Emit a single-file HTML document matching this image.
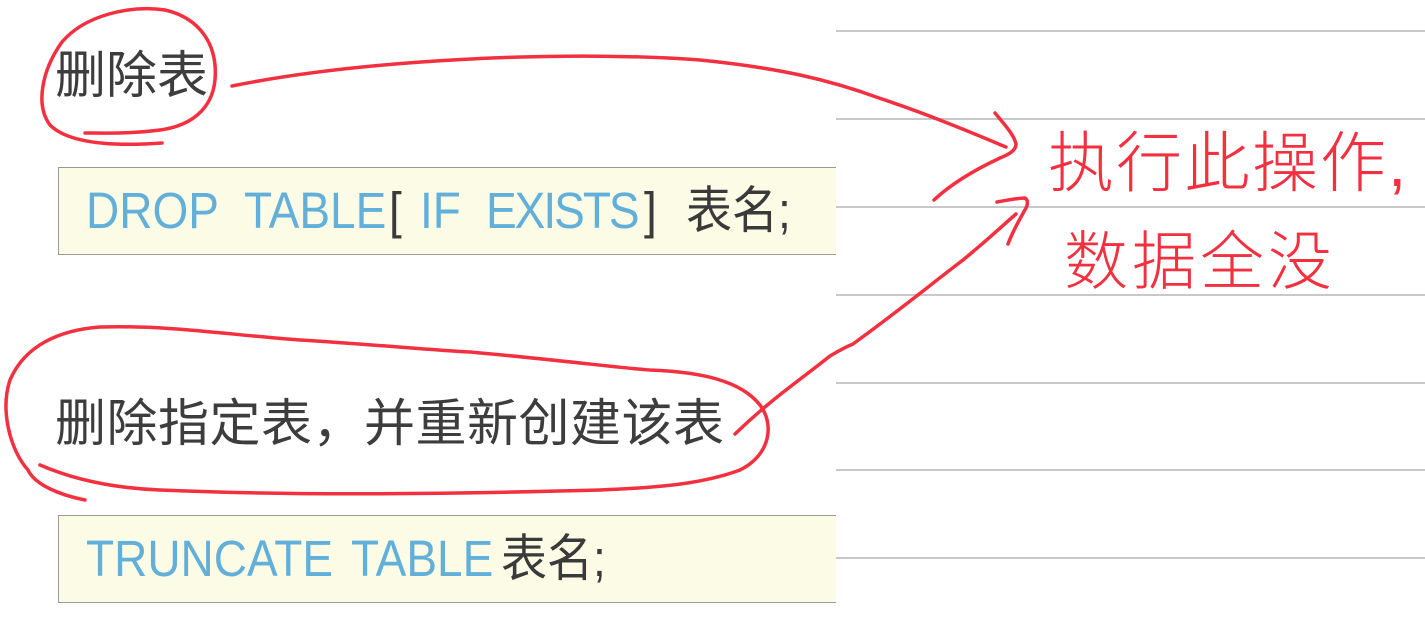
<!DOCTYPE html>
<html><head><meta charset="utf-8"><style>
html,body{margin:0;padding:0;background:#fff;width:1425px;height:626px;overflow:hidden;position:relative}
.h{position:absolute;left:55px;font-family:"Liberation Sans","Noto Sans CJK SC",sans-serif;font-size:51px;color:#3d3d3d;line-height:1;white-space:nowrap}
.box{position:absolute;left:58px;width:778px;height:88px;background:#fcfce6;border:1px solid #9a9a9a;border-right:none;box-sizing:border-box}
.code{position:absolute;left:27px;font-family:"Liberation Sans","Noto Sans CJK SC",sans-serif;font-size:46px;color:#62afd9;white-space:nowrap;line-height:1;transform:scaleY(1.1);transform-origin:left top}
.code span{position:absolute;top:0}
.k{color:#3a3a3a}
.ln{position:absolute;left:836px;width:589px;height:2px;background:#c8c8c8}
.rt{position:absolute;font-family:"Liberation Sans","Noto Sans CJK SC",sans-serif;color:#f2303f;font-weight:300;white-space:nowrap;line-height:1}
</style></head><body>
<div class="ln" style="top:30px"></div>
<div class="ln" style="top:118px"></div>
<div class="ln" style="top:206px"></div>
<div class="ln" style="top:294px"></div>
<div class="ln" style="top:382px"></div>
<div class="ln" style="top:469px"></div>
<div class="ln" style="top:557px"></div>

<div class="h" style="top:50px">删除表</div>
<div class="box" style="top:167px"><div class="code" style="top:17px">
<span style="left:0">DROP</span><span style="left:158px">TABLE</span><span class="k" style="left:303px">[</span><span style="left:334px">IF</span><span style="left:400px;letter-spacing:-2px">EXISTS</span><span class="k" style="left:558px">]</span><span class="k" style="left:600px">表名;</span>
</div></div>
<div class="h" style="top:398px;letter-spacing:0.5px">删除指定表，并重新创建该表</div>
<div class="box" style="top:515px"><div class="code" style="top:17px">
<span style="left:0">TRUNCATE</span><span style="left:265px">TABLE</span><span class="k" style="left:415px">表名;</span>
</div></div>

<div class="rt" style="left:1048px;top:130px;font-size:66px;letter-spacing:2px">执行此操作,</div>
<div class="rt" style="left:1064px;top:230px;font-size:64px;letter-spacing:4px">数据全没</div>

<svg width="1425" height="626" style="position:absolute;left:0;top:0" fill="none" stroke="#f2303f" stroke-width="3.5" stroke-linecap="round" stroke-linejoin="round">
<path d="M162 143 C120 146 70 145 50 125 C35 105 42 70 62 42 C85 15 130 5 165 10 C200 18 218 45 215 80 C212 110 190 126 160 130 C130 134 100 133 85 133"/>
<path d="M232 86 C360 60 560 50 700 60 C780 68 830 80 879 98 C930 115 970 132 1006 147"/>
<path d="M995 113 C1005 125 1014 135 1016 144 C1016 150 1010 154 1000 158 C970 172 950 185 934 200"/>
<path d="M85 500 C60 495 35 485 28 470 M28 470 C10 450 0 410 10 380 C25 345 60 330 100 327 C170 325 230 335 300 340 C380 345 430 350 470 352 C560 360 620 368 650 370 C700 372 740 380 760 405 C775 425 770 455 740 470 C700 485 650 488 600 490 C450 494 300 496 160 490 C110 488 70 478 40 465"/>
<path d="M735 434 C770 400 800 380 830 356 C840 350 848 346 853 344 C900 310 930 285 963 260 C985 242 1000 228 1016 214"/>
<path d="M997 202 C1008 200 1018 198 1025 198 C1028 200 1028 204 1026 208 C1018 222 1012 233 1008 244"/>
</svg>
</body></html>
